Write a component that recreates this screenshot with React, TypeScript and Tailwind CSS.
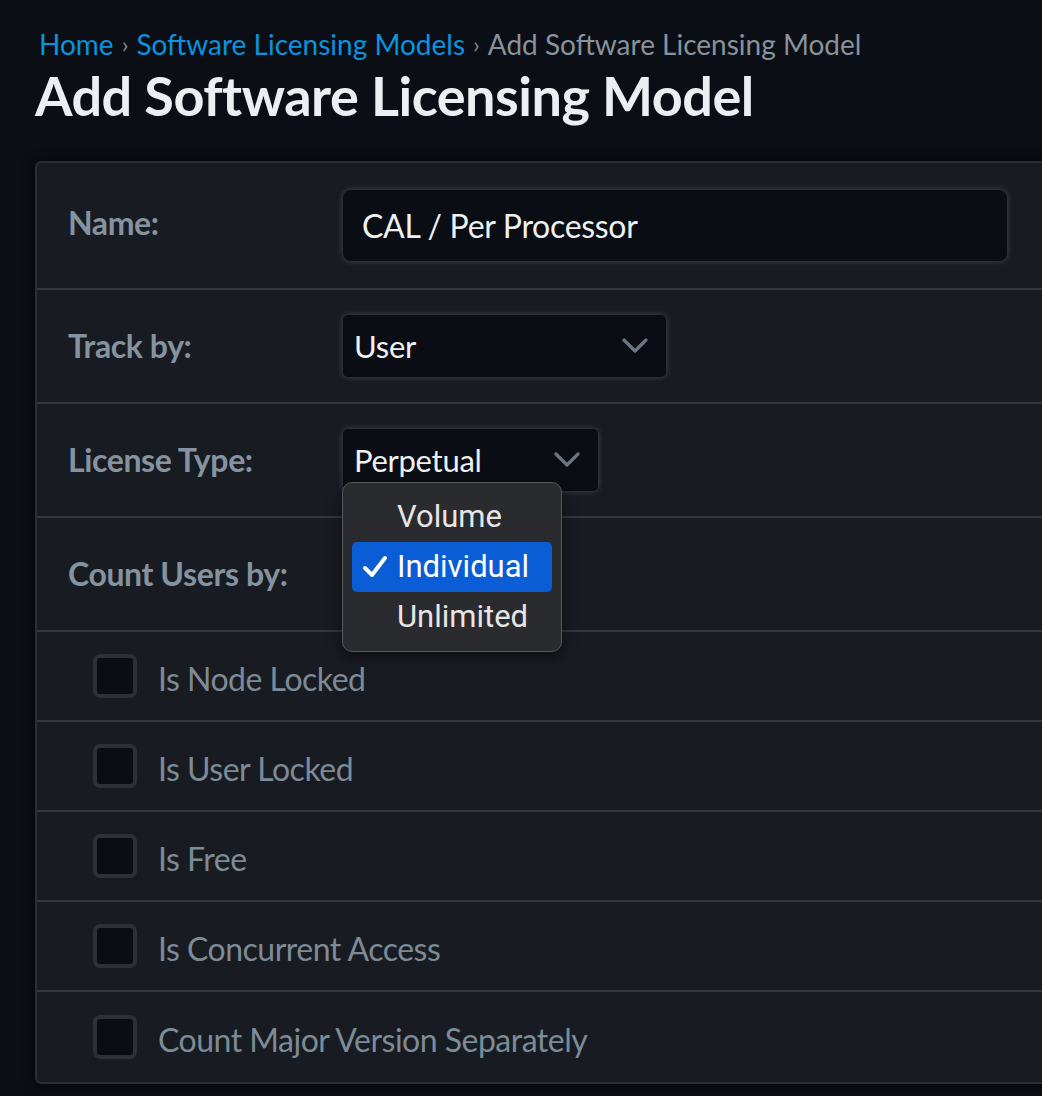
import React from "react";

const labelFont = { fontFamily: "Lato, 'Noto Sans', sans-serif" } as React.CSSProperties;

function Chevron() {
  return (
    <svg width="26" height="16" viewBox="0 0 26 16" fill="none">
      <path d="M2 2 L13 13 L24 2" stroke="#6b7583" strokeWidth="3.2" strokeLinecap="round" strokeLinejoin="round" />
    </svg>
  );
}

function Checkbox() {
  return <div className="w-[44px] h-[44px] rounded-[7px] border-[4px] border-[#2d3036] bg-[#0a0d12] shrink-0" />;
}

export default function App() {
  const checks = ["Is Node Locked", "Is User Locked", "Is Free", "Is Concurrent Access", "Count Major Version Separately"];
  return (
    <div className="w-[1042px] h-[1096px] overflow-hidden bg-[#0b0e14] relative" style={labelFont}>
      <div className="pl-[39px] pt-[28px] h-[32px] box-content flex items-center text-[28px] leading-none" style={{ fontFamily: "Lato, sans-serif" }}>
        <span className="text-[#0a93df]">Home</span>
        <span className="text-[#7b8792] mx-[8px] text-[24px]">›</span>
        <span className="text-[#0a93df]">Software Licensing Models</span>
        <span className="text-[#7b8792] mx-[8px] text-[24px]">›</span>
        <span className="text-[#87939d]">Add Software Licensing Model</span>
      </div>
      <h1 className="pl-[35px] mt-[4px] h-[64px] flex items-center text-[54px] font-bold text-[#eceef1] tracking-[-0.5px] leading-none" style={{ fontFamily: "Lato, sans-serif" }}>
        Add Software Licensing Model
      </h1>
      <div className="ml-[35px] mt-[33px] w-[1040px] rounded-[6px] border-2 border-[#2a2e35] bg-[#181b21] shadow-[0_0_12px_rgba(0,0,0,0.7)]">
        <div className="h-[127px] border-b-2 border-[#33373e] flex items-start">
          <div className="w-[306px] pl-[31px] pt-[44px] text-[32px] font-bold text-[#8593a0] tracking-[-0.4px] leading-none">Name:</div>
          <div className="pt-[27px]">
            <div className="w-[664px] h-[71px] rounded-[8px] bg-[#0a0d13] shadow-[0_0_6px_rgba(190,200,220,0.28)] flex items-center pl-[19px] text-[32px] text-[#eef0f2] tracking-[-0.3px]">
              CAL / Per Processor
            </div>
          </div>
        </div>
        <div className="h-[114px] border-b-2 border-[#33373e] flex items-center">
          <div className="w-[306px] pl-[31px] text-[32px] font-bold text-[#8593a0] tracking-[-0.4px] leading-none">Track by:</div>
          <div className="w-[323px] h-[62px] rounded-[5px] bg-[#0a0d13] shadow-[0_0_6px_rgba(190,200,220,0.28)] flex items-center justify-between pl-[11px] pr-[18px] text-[31px] text-[#eef0f2] tracking-[-0.3px]">
            <span>User</span>
            <Chevron />
          </div>
        </div>
        <div className="h-[114px] border-b-2 border-[#33373e] flex items-center">
          <div className="w-[306px] pl-[31px] text-[32px] font-bold text-[#8593a0] tracking-[-0.4px] leading-none">License Type:</div>
          <div className="w-[255px] h-[62px] rounded-[5px] bg-[#0a0d13] shadow-[0_0_6px_rgba(190,200,220,0.28)] flex items-center justify-between pl-[11px] pr-[18px] text-[31px] text-[#eef0f2] tracking-[-0.3px]">
            <span>Perpetual</span>
            <Chevron />
          </div>
        </div>
        <div className="h-[114px] border-b-2 border-[#33373e] flex items-center">
          <div className="w-[306px] pl-[31px] text-[32px] font-bold text-[#8593a0] tracking-[-0.4px] leading-none">Count Users by:</div>
        </div>
        {checks.map((c, i) => (
          <div key={c} className={`h-[90px] flex items-center pl-[56px] gap-[21px] ${i < checks.length - 1 ? "border-b-2 border-[#33373e]" : ""}`}>
            <Checkbox />
            <span className="text-[32px] text-[#7d8b97] tracking-[-0.5px] pt-[6px]">{c}</span>
          </div>
        ))}
      </div>

      <div className="absolute left-[342px] top-[482px] w-[220px] h-[170px] rounded-[10px] border border-[#55565b] bg-[#2a2b2f] p-[9px] shadow-[0_4px_14px_rgba(0,0,0,0.5)]" style={{ fontFamily: "Roboto, sans-serif" }}>
        <div className="h-[50px] flex items-center pl-[45px] text-[31px] text-[#e6e6e6]">Volume</div>
        <div className="h-[50px] flex items-center rounded-[5px] bg-[#0b5dd6] text-[31px] text-white">
          <span className="w-[45px] flex justify-center">
            <svg width="26" height="24" viewBox="0 0 26 24"><path d="M3 13 L10 20 L23 3" stroke="white" strokeWidth="4" fill="none" strokeLinecap="round" strokeLinejoin="round" /></svg>
          </span>
          <span>Individual</span>
        </div>
        <div className="h-[50px] flex items-center pl-[45px] text-[31px] text-[#e6e6e6]">Unlimited</div>
      </div>
    </div>
  );
}
